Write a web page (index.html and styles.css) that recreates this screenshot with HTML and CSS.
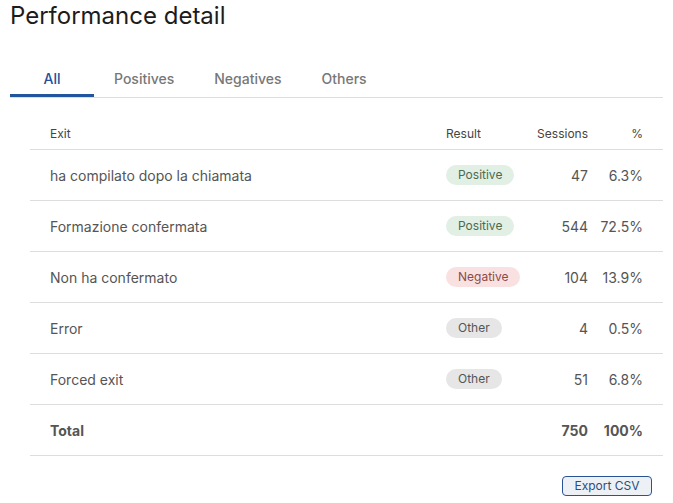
FILE: index.html
```html
<!DOCTYPE html>
<html lang="en">
<head>
    <meta charset="UTF-8">
    <meta name="viewport" content="width=device-width, initial-scale=1.0">
    <title>Performance detail</title>
    <link rel="stylesheet" href="styles.css">
</head>
<body>

    <!-- Title -->
    <h1 class="page-title">Performance detail</h1>

    <!-- Tabs -->
    <nav class="tabs">
        <a href="#" class="tab active">All</a>
        <a href="#" class="tab">Positives</a>
        <a href="#" class="tab">Negatives</a>
        <a href="#" class="tab">Others</a>
    </nav>

    <!-- Exits table -->
    <table class="exit-table">
        <colgroup>
            <col class="col-exit">
            <col class="col-result">
            <col class="col-sessions">
            <col class="col-pct">
        </colgroup>
        <thead>
            <tr>
                <th class="cell-exit">Exit</th>
                <th>Result</th>
                <th class="num">Sessions</th>
                <th class="num cell-pct">%</th>
            </tr>
        </thead>
        <tbody>
            <tr>
                <td class="cell-exit">ha compilato dopo la chiamata</td>
                <td><span class="badge positive">Positive</span></td>
                <td class="num">47</td>
                <td class="num cell-pct">6.3%</td>
            </tr>
            <tr>
                <td class="cell-exit">Formazione confermata</td>
                <td><span class="badge positive">Positive</span></td>
                <td class="num">544</td>
                <td class="num cell-pct">72.5%</td>
            </tr>
            <tr>
                <td class="cell-exit">Non ha confermato</td>
                <td><span class="badge negative">Negative</span></td>
                <td class="num">104</td>
                <td class="num cell-pct">13.9%</td>
            </tr>
            <tr>
                <td class="cell-exit">Error</td>
                <td><span class="badge other">Other</span></td>
                <td class="num">4</td>
                <td class="num cell-pct">0.5%</td>
            </tr>
            <tr>
                <td class="cell-exit">Forced exit</td>
                <td><span class="badge other">Other</span></td>
                <td class="num">51</td>
                <td class="num cell-pct">6.8%</td>
            </tr>
            <tr class="total-row">
                <td class="cell-exit">Total</td>
                <td></td>
                <td class="num">750</td>
                <td class="num cell-pct">100%</td>
            </tr>
        </tbody>
    </table>

    <div class="actions">
        <button class="btn-export">Export CSV</button>
    </div>

</body>
</html>
```

FILE: styles.css
```css
body {
    font-family: Inter, "Noto Sans", sans-serif;
    margin: 0;
    padding: 0 10px;
    background-color: #fff;
    color: #555;
}

.page-title {
    margin: 0;
    font-size: 24px;
    line-height: 32px;
    font-weight: 400;
    color: #1c1c1c;
}

/* Tabs */
.tabs {
    display: flex;
    margin-top: 27px;
    border-bottom: 1px solid #ddd;
}

.tab {
    padding: 10px 20px 5px;
    font-size: 14px;
    line-height: 20px;
    font-weight: 500;
    color: #777;
    text-decoration: none;
    text-align: center;
    border-bottom: 3px solid transparent;
}

.tab.active {
    min-width: 44px;
    color: #23509a;
    border-bottom-color: #23559f;
}

/* Table */
.exit-table {
    width: 633px;
    margin: 19px 0 0 20px;
    border-collapse: collapse;
    table-layout: fixed;
}

.col-exit { width: 416px; }
.col-result { width: 82px; }
.col-sessions { width: 60px; }
.col-pct { width: 75px; }

.exit-table th,
.exit-table td {
    padding: 0;
    text-align: left;
    border-bottom: 1px solid #ddd;
}

.exit-table th {
    height: 32px;
    font-size: 12px;
    font-weight: 400;
    color: #444;
}

.exit-table td {
    height: 50px;
    font-size: 14px;
    color: #555;
}

.exit-table .cell-exit {
    padding-left: 20px;
}

.exit-table .num {
    text-align: right;
}

.exit-table .cell-pct {
    padding-right: 20px;
}

.total-row td {
    font-weight: 700;
}

.badge {
    display: inline-block;
    padding: 0 12px;
    height: 20px;
    line-height: 20px;
    border-radius: 10px;
    font-size: 12px;
}

.badge.positive {
    background-color: #e2efe4;
    color: #4b6a50;
}

.badge.negative {
    background-color: #fae1e1;
    color: #8c4a4a;
}

.badge.other {
    background-color: #e6e6e6;
    color: #555;
}

/* Export */
.actions {
    display: flex;
    justify-content: flex-end;
    margin-top: 20px;
    padding-right: 11px;
}

.btn-export {
    font-family: Inter, "Noto Sans", sans-serif;
    font-size: 12px;
    line-height: 16px;
    padding: 1px 11px;
    width: 90px;
    color: #2b4d82;
    background-color: #edf1f5;
    border: 1px solid #2a5394;
    border-radius: 4px;
}
```
